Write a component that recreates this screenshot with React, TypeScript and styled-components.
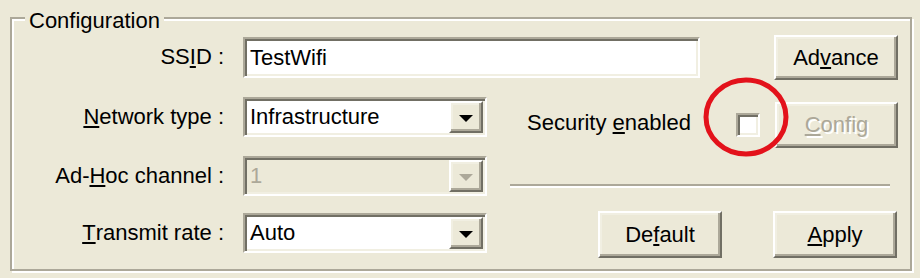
import React from 'react';
import styled, { createGlobalStyle } from 'styled-components';

const GlobalStyle = createGlobalStyle`
  html, body { margin: 0; padding: 0; background: #ECE9D8; }
  body {
    width: 920px; height: 278px; overflow: hidden;
    font-family: "Liberation Sans", Arial, sans-serif;
    font-size: 22px; color: #000;
  }
`;

const Dialog = styled.div`
  width: 920px;
  height: 278px;
  box-sizing: border-box;
  padding: 17px 8px 7px 10px;
  background: #ECE9D8;
`;

const Group = styled.section`
  position: relative;
  box-sizing: border-box;
  height: 254px;
  border: 2px solid #ACA899;
  box-shadow: inset 2px 2px 0 #fff, 2px 2px 0 #fff;
  padding-top: 16px;
  display: flex;
  flex-direction: column;
`;

const Legend = styled.div`
  position: absolute;
  top: -10px;
  left: 13px;
  padding: 0 4px 0 4px;
  line-height: 24px;
  background: #ECE9D8;
  white-space: nowrap;
`;

const Row = styled.div<{ $h: number }>`
  display: flex;
  align-items: flex-start;
  height: ${(p) => p.$h}px;
  flex: none;
`;

const Label = styled.label<{ $top?: number }>`
  width: 212px;
  height: 40px;
  margin-top: ${(p) => p.$top ?? 0}px;
  margin-right: 19px;
  display: flex;
  align-items: center;
  justify-content: flex-end;
  white-space: nowrap;
  flex: none;
`;

const U = styled.span`
  text-decoration: underline;
  text-decoration-thickness: 2px;
  text-underline-offset: 2px;
`;

const sunken = `
  border: 2px solid;
  border-color: #ACA899 #fff #fff #ACA899;
  box-shadow: inset 2px 2px 0 #716F64, inset -2px -2px 0 #F1EFE2;
`;

const raised = `
  border: 2px solid;
  border-color: #fff #716F64 #716F64 #fff;
  box-shadow: inset -2px -2px 0 #ACA899, inset 2px 2px 0 #F1EFE2;
`;

const TextBox = styled.div<{ $w: number; $top?: number }>`
  ${sunken}
  box-sizing: border-box;
  width: ${(p) => p.$w}px;
  height: 41px;
  margin-top: ${(p) => p.$top ?? 0}px;
  background: #fff;
  display: flex;
  align-items: center;
  padding-left: 5px;
  flex: none;
`;

const Combo = styled.div<{ $disabled?: boolean; $top?: number }>`
  ${sunken}
  box-sizing: border-box;
  width: 244px;
  height: 40px;
  margin-top: ${(p) => p.$top ?? 0}px;
  background: ${(p) => (p.$disabled ? '#ECE9D8' : '#fff')};
  color: ${(p) => (p.$disabled ? '#ACA899' : '#000')};
  display: flex;
  align-items: stretch;
  flex: none;
  padding: 2px;
`;

const ComboText = styled.div`
  flex: 1;
  display: flex;
  align-items: center;
  padding-left: 3px;
`;

const DropButton = styled.div<{ $disabled?: boolean }>`
  ${raised}
  box-sizing: border-box;
  width: 34px;
  background: #ECE9D8;
  display: flex;
  align-items: center;
  justify-content: center;
  &::after {
    content: '';
    width: 0;
    height: 0;
    margin-top: 2px;
    border-left: 7px solid transparent;
    border-right: 7px solid transparent;
    border-top: 7px solid ${(p) => (p.$disabled ? '#ACA899' : '#000')};
  }
`;

const Button = styled.div<{ $w?: number; $h?: number; $top?: number; $left?: number; $disabled?: boolean }>`
  ${raised}
  box-sizing: border-box;
  width: ${(p) => p.$w ?? 124}px;
  height: ${(p) => p.$h ?? 46}px;
  margin-top: ${(p) => p.$top ?? 0}px;
  margin-left: ${(p) => p.$left ?? 0}px;
  background: #ECE9D8;
  display: flex;
  align-items: center;
  justify-content: center;
  flex: none;
  color: ${(p) => (p.$disabled ? '#ACA899' : '#000')};
  text-shadow: ${(p) => (p.$disabled ? '2px 2px 0 #fff' : 'none')};
`;

const SideLabel = styled.span<{ $left: number; $w: number; $top: number }>`
  margin-left: ${(p) => p.$left}px;
  margin-top: ${(p) => p.$top}px;
  width: ${(p) => p.$w}px;
  height: 24px;
  display: flex;
  align-items: center;
  white-space: nowrap;
  flex: none;
`;

const CheckWrap = styled.div<{ $top: number }>`
  position: relative;
  margin-top: ${(p) => p.$top}px;
  flex: none;
`;

const CheckBox = styled.div`
  ${sunken}
  box-sizing: border-box;
  width: 24px;
  height: 24px;
  background: #fff;
`;

const Highlight = styled.svg`
  position: absolute;
  left: -35px;
  top: -38px;
  pointer-events: none;
  overflow: visible;
`;

const Separator = styled.div<{ $left: number; $w: number; $top: number }>`
  margin-left: ${(p) => p.$left}px;
  margin-top: ${(p) => p.$top}px;
  width: ${(p) => p.$w}px;
  height: 0;
  border-top: 2px solid #ACA899;
  border-bottom: 2px solid #fff;
  flex: none;
`;

export default function App() {
  return (
    <>
      <GlobalStyle />
      <Dialog>
        <Group>
          <Legend>Configuration</Legend>

          <Row $h={62}>
            <Label $top={2}>
              SS<U>I</U>D :
            </Label>
            <TextBox $w={457} $top={2}>TestWifi</TextBox>
            <Button $left={74} $h={45}>
              Ad<U>v</U>ance
            </Button>
          </Row>

          <Row $h={59}>
            <Label>
              <U>N</U>etwork type :
            </Label>
            <Combo>
              <ComboText>Infrastructure</ComboText>
              <DropButton />
            </Combo>
            <SideLabel $left={40} $w={209} $top={14}>
              Security&nbsp;<U>e</U>nabled
            </SideLabel>
            <CheckWrap $top={16}>
              <CheckBox />
              <Highlight width="90" height="84" viewBox="0 0 90 84">
                <ellipse cx="45" cy="42" rx="40" ry="37" fill="none" stroke="#E3121B" strokeWidth="5" />
              </Highlight>
            </CheckWrap>
            <Button $left={15} $w={123} $top={5} $disabled>
              <U>C</U>onfig
            </Button>
          </Row>

          <Row $h={55}>
            <Label>
              Ad-<U>H</U>oc channel :
            </Label>
            <Combo $disabled>
              <ComboText>1</ComboText>
              <DropButton $disabled />
            </Combo>
            <Separator $left={23} $w={380} $top={28} />
          </Row>

          <Row $h={50}>
            <Label $top={2}>
              <U>T</U>ransmit rate :
            </Label>
            <Combo $top={2}>
              <ComboText>Auto</ComboText>
              <DropButton />
            </Combo>
            <Button $left={111} $h={47}>
              De<U>f</U>ault
            </Button>
            <Button $left={51} $h={47}>
              <U>A</U>pply
            </Button>
          </Row>
        </Group>
      </Dialog>
    </>
  );
}
